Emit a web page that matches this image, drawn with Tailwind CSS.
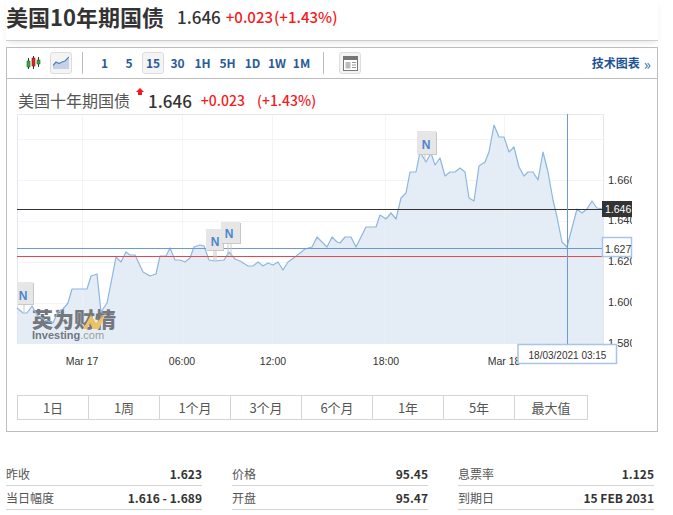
<!DOCTYPE html>
<html lang="zh-CN">
<head>
    <meta charset="UTF-8">
    <title>美国10年期国债</title>
    <script src="https://cdn.jsdelivr.net/npm/@tailwindcss/browser@4"></script>
</head>
<body class="bg-white overflow-hidden font-['Noto_Sans_CJK_SC','Noto_Sans',sans-serif] text-[#333]">
    <div class="w-[673px] h-[515px] overflow-hidden px-[6px]">
        <!-- Title -->
        <div class="w-[652px] h-[41px] border-b border-[#ccc] shadow-[0_3px_6px_-2px_rgba(0,0,0,0.12)] flex items-center pb-[8px]">
            <h1 class="text-[22px] leading-[32px] font-bold">美国10年期国债</h1>
            <span class="ml-[13px] text-[17px] leading-none font-medium">1.646</span>
            <span class="ml-[5px] text-[15px] leading-none font-medium text-[#f51a22]">+0.023</span>
            <span class="ml-[1px] text-[15px] leading-none font-medium text-[#f51a22]">(+1.43%)</span>
        </div>

        <!-- Chart widget -->
        <div class="mt-[6px] w-[652px] h-[385px] border border-[#bdbdbd]">
            <!-- Toolbar -->
            <div class="h-[31px] border-b border-[#bdbdbd] flex items-center relative">
                <svg class="ml-[19px] w-[15px] h-[16px]" viewBox="0 0 15 16">
                    <path d="M2.5 3v11M7.5 1v13M12.5 2v10" stroke="#333" fill="none"/>
                    <rect x="1" y="6" width="3" height="6" fill="#3aa935" stroke="#1d6b1a" stroke-width=".6"/>
                    <rect x="6" y="3" width="3" height="8" fill="#e2232a" stroke="#8e1418" stroke-width=".6"/>
                    <rect x="11" y="5" width="3" height="4" fill="#3aa935" stroke="#1d6b1a" stroke-width=".6"/>
                </svg>
                <div class="ml-[9px] w-[22px] h-[22px] rounded-[3px] border border-[#ddd] bg-[#f4f4f4] flex items-center justify-center">
                    <svg class="w-[16px] h-[14px]" viewBox="0 0 16 14">
                        <path d="M0 10 L3 6 L6 7.500 L9 6 L12 5 L16 1 V13 H0 Z" fill="#c4d1e6"/>
                        <path d="M0 9.500 L3 6 L6 7.500 L9 6 L12 5 L16 1" stroke="#4f80bd" stroke-width="1.200" fill="none"/>
                    </svg>
                </div>
                <div class="ml-[10px] w-px h-[22px] bg-[#bbb]"></div>
                <div class="ml-[9px] flex items-center text-[12px] font-bold text-[#2b5a9b]">
                    <span class="w-[25px] text-center">1</span>
                    <span class="w-[24px] text-center">5</span>
                    <span class="w-[22px] h-[22px] mx-[1px] rounded-[3px] border border-[#ddd] bg-[#f4f4f4] flex items-center justify-center">15</span>
                    <span class="w-[25px] text-center">30</span>
                    <span class="w-[25px] text-center">1H</span>
                    <span class="w-[25px] text-center">5H</span>
                    <span class="w-[25px] text-center">1D</span>
                    <span class="w-[24px] text-center">1W</span>
                    <span class="w-[25px] text-center">1M</span>
                </div>
                <div class="ml-[9px] w-px h-[22px] bg-[#bbb]"></div>
                <div class="ml-[15px] w-[22px] h-[22px] rounded-[3px] border border-[#ddd] bg-[#f4f4f4] flex items-center justify-center">
                    <svg class="w-[15px] h-[15px]" viewBox="0 0 15 15">
                        <rect x=".5" y=".5" width="14" height="14" fill="#fff" stroke="#777"/>
                        <rect x="1" y="1" width="13" height="3" fill="#777"/>
                        <rect x="2.500" y="6" width="5" height="6.500" fill="#bbb"/>
                        <path d="M9 6.500h4M9 9h4M9 11.500h4" stroke="#999"/>
                    </svg>
                </div>
                <div class="ml-auto mr-[6px] flex items-center text-[12px] font-bold text-[#1d5496]">
                    技术图表<span class="ml-[4px] font-normal text-[15px] leading-none text-[#2b6cb5]">»</span>
                </div>
            </div>

            <!-- Chart header -->
            <div class="h-[35px] pl-[11px] flex items-center relative pt-[7px]">
                <span class="text-[16px] leading-none text-[#555]">美国十年期国债</span>
                <svg class="ml-[6px] -mt-[17px] w-[8px] h-[7px]" viewBox="0 0 8 7"><path d="M4 0 L8 4 H6 V7 H2 V4 H0 Z" fill="#f51a22"/></svg>
                <span class="ml-[4px] text-[17px] leading-none font-medium">1.646</span>
                <span class="ml-[9px] text-[14px] leading-none font-medium text-[#f51a22]">+0.023</span>
                <span class="ml-[12px] text-[14px] leading-none font-medium text-[#f51a22]">(+1.43%)</span>
            </div>

            <!-- Chart canvas, coordinates are page pixels -->
            <svg class="block w-[650px] h-[270px]" viewBox="7 114 650 270" font-family="'Liberation Sans',sans-serif">
                <defs>
                    <clipPath id="axisClip"><rect x="600" y="114" width="32" height="240"/></clipPath>
                </defs>
                <g stroke="#f3f4f7" fill="none">
                    <path d="M17 139.500H603M17 180.500H603M17 221.500H603M17 262.500H603M17 303.500H603"/>
                    <path d="M82.500 114V344M182.500 114V344M272.500 114V344M385.500 114V344M504.500 114V344"/>
                </g>
                <polygon id="area" fill="#e4edf5"/>
                <g stroke="#eaf0f6" fill="none">
                    <path d="M82.500 280V344M182.500 262V344M272.500 268V344M385.500 222V344M504.500 140V344"/>
                </g>
                <path d="M17.500 344V114.500H603.500V344" fill="none" stroke="#e3e7f1"/>

                <!-- Watermark -->
                <text x="32" y="327" font-family="'Noto Sans CJK SC'" font-size="21" font-weight="900" fill="#74777d">英为财情</text>
                <polygon points="83,329 91,315 96,323 106,313 99,329 93,329 90,323 87,329" fill="#ecc264"/>
                <text x="32" y="339" font-size="11" font-weight="700" fill="#74777d">Investing<tspan font-weight="400" fill="#9a9da2">.com</tspan></text>

                <polyline id="line" fill="none" stroke="#8db6df" stroke-width="1.200" stroke-linejoin="round"/>

                <path d="M17 248.500H603" stroke="#6c9ad9"/>
                <path d="M17 256.500H603" stroke="#e2494f"/>
                <path d="M17 209.500H603" stroke="#333"/>
                <path d="M567.500 114V344" stroke="#6c9ad9"/>

                <!-- News flags -->
                <g font-size="12" font-weight="700" fill="#4a86d0" text-anchor="middle">
                    <path d="M24 304V312M214 250V260M216 250V260M228 243V256M231 243V256M425 154V162" stroke="#c9c9c9" fill="none"/>
                    <rect x="18" y="283" width="16" height="22" fill="#c8c8c8"/>
                    <rect x="17" y="282" width="16" height="22" fill="#e6e6e6"/>
                    <text x="23" y="300">N</text>
                    <rect x="207" y="230" width="17" height="21" fill="#c8c8c8"/>
                    <rect x="206" y="229" width="17" height="21" fill="#e6e6e6"/>
                    <text x="215" y="246">N</text>
                    <rect x="222" y="223" width="19" height="21" fill="#c8c8c8"/>
                    <rect x="221" y="222" width="19" height="21" fill="#e6e6e6"/>
                    <text x="229" y="238">N</text>
                    <rect x="418" y="132" width="19" height="23" fill="#c8c8c8"/>
                    <rect x="417" y="131" width="19" height="23" fill="#e6e6e6"/>
                    <text x="426" y="149">N</text>
                </g>

                <!-- Axis labels -->
                <g font-size="11" fill="#333" clip-path="url(#axisClip)">
                    <text x="608" y="184">1.660</text>
                    <text x="608" y="224">1.640</text>
                    <text x="608" y="265">1.620</text>
                    <text x="608" y="306">1.600</text>
                    <text x="608" y="347">1.580</text>
                </g>
                <g font-size="10.500" fill="#333" text-anchor="middle">
                    <text x="82" y="365">Mar 17</text>
                    <text x="182" y="365">06:00</text>
                    <text x="273" y="365">12:00</text>
                    <text x="386" y="365">18:00</text>
                    <text x="504" y="365">Mar 18</text>
                </g>

                <rect x="602" y="201" width="30" height="16" fill="#333"/>
                <text x="605" y="213" font-size="10.500" fill="#fff">1.646</text>
                <rect x="602.500" y="237.500" width="29" height="19" fill="#fff" stroke="#a9c4e8" stroke-width="1.500"/>
                <text x="605" y="253" font-size="10.500" fill="#333">1.627</text>
                <rect x="518" y="344.500" width="98.500" height="19" fill="#fff" stroke="#a9c4e8" stroke-width="1.500"/>
                <text x="567.500" y="359" font-size="10" fill="#333" text-anchor="middle">18/03/2021 03:15</text>
            </svg>

            <!-- Range tabs -->
            <div class="ml-[10px] mt-[11px] w-[571px] h-[25px] grid grid-cols-[71px_71px_71px_71px_71px_71px_71px_1fr] border border-[#d4d4d4] text-[13px] text-[#555]">
                <div class="flex items-center justify-center border-r border-[#d4d4d4]">1日</div>
                <div class="flex items-center justify-center border-r border-[#d4d4d4]">1周</div>
                <div class="flex items-center justify-center border-r border-[#d4d4d4]">1个月</div>
                <div class="flex items-center justify-center border-r border-[#d4d4d4]">3个月</div>
                <div class="flex items-center justify-center border-r border-[#d4d4d4]">6个月</div>
                <div class="flex items-center justify-center border-r border-[#d4d4d4]">1年</div>
                <div class="flex items-center justify-center border-r border-[#d4d4d4]">5年</div>
                <div class="flex items-center justify-center">最大值</div>
            </div>
        </div>

        <!-- Stats -->
        <div class="mt-[30px] w-[648px] grid grid-cols-[196px_196px_196px] gap-x-[30px] text-[12px]">
            <div class="h-[24px] border-b border-[#d4d4d4] flex justify-between items-center"><span class="text-[#555]">昨收</span><b class="font-bold">1.623</b></div>
            <div class="h-[24px] border-b border-[#d4d4d4] flex justify-between items-center"><span class="text-[#555]">价格</span><b class="font-bold">95.45</b></div>
            <div class="h-[24px] border-b border-[#d4d4d4] flex justify-between items-center"><span class="text-[#555]">息票率</span><b class="font-bold">1.125</b></div>
            <div class="h-[24px] border-b border-[#d4d4d4] flex justify-between items-center"><span class="text-[#555]">当日幅度</span><b class="font-bold">1.616 - 1.689</b></div>
            <div class="h-[24px] border-b border-[#d4d4d4] flex justify-between items-center"><span class="text-[#555]">开盘</span><b class="font-bold">95.47</b></div>
            <div class="h-[24px] border-b border-[#d4d4d4] flex justify-between items-center"><span class="text-[#555]">到期日</span><b class="font-bold">15 FEB 2031</b></div>
        </div>
    </div>

    <script>
        // Price line traced from the chart, in page pixels
        const points = "17,308 23,313 27,313 32,306 37,315 45,320 53,323 58,312 63,309 68,303 72,289 87,289 91,276 97,274 101,312 107,303 111,283 116,257 121,262 126,252 130,255 135,255 143,272 150,276 156,274 160,256 166,256 170,248 175,260 180,260 185,262 190,258 194,247 200,245 204,246 209,260 215,261 224,260 229,252 235,259 240,261 248,266 253,266 258,262 263,266 268,263 273,265 278,262 283,270 288,262 295,257 305,249 312,247 317,237 327,247 332,237 337,242 340,243 345,237 351,237 356,247 366,227 376,227 380,215 386,219 391,213 396,219 401,198 406,193 410,172 416,172 420,152 426,162 431,153 435,165 440,158 445,176 450,172 455,172 460,168 465,172 469,198 474,201 479,166 485,162 489,152 494,125 499,137 504,137 509,152 514,147 519,167 524,176 528,172 533,172 538,180 543,152 548,172 553,200 557,217 562,242 567,247 577,209 582,213 587,209 592,201 597,208 603,209";
        document.getElementById('line').setAttribute('points', points);
        document.getElementById('area').setAttribute('points', points + " 603,344 17,344");
    </script>
</body>
</html>
